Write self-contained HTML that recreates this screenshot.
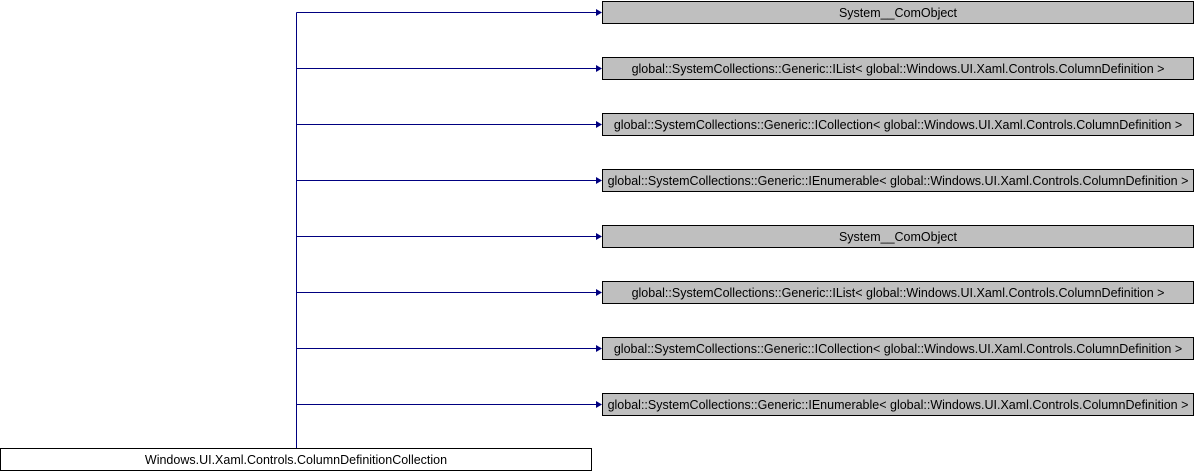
<!DOCTYPE html>
<html><head><meta charset="utf-8"><style>
html,body{margin:0;padding:0;background:#fff;width:1194px;height:472px;overflow:hidden}
svg{display:block}
text{font-family:"Liberation Sans",Arial,sans-serif;font-size:12.5px;fill:#000}
</style></head><body>
<svg width="1194" height="472" viewBox="0 0 1194 472" xmlns="http://www.w3.org/2000/svg">
<g stroke="#000080" stroke-width="1" fill="none">
<path d="M296.5 449V12.5"/>
<path d="M296.5 12.5H596"/><path d="M296.5 68.5H596"/><path d="M296.5 124.5H596"/><path d="M296.5 180.5H596"/>
<path d="M296.5 236.5H596"/><path d="M296.5 292.5H596"/><path d="M296.5 348.5H596"/><path d="M296.5 404.5H596"/>
</g>
<g fill="#000080">
<polygon points="596,9 602,12.5 596,16"/><polygon points="596,65 602,68.5 596,72"/>
<polygon points="596,121 602,124.5 596,128"/><polygon points="596,177 602,180.5 596,184"/>
<polygon points="596,233 602,236.5 596,240"/><polygon points="596,289 602,292.5 596,296"/>
<polygon points="596,345 602,348.5 596,352"/><polygon points="596,401 602,404.5 596,408"/>
</g>
<g fill="#bfbfbf" stroke="#000" stroke-width="1">
<rect x="602.5" y="1.5" width="591" height="22"/><rect x="602.5" y="57.5" width="591" height="22"/>
<rect x="602.5" y="113.5" width="591" height="22"/><rect x="602.5" y="169.5" width="591" height="22"/>
<rect x="602.5" y="225.5" width="591" height="22"/><rect x="602.5" y="281.5" width="591" height="22"/>
<rect x="602.5" y="337.5" width="591" height="22"/><rect x="602.5" y="393.5" width="591" height="22"/>
</g>
<rect x="0.5" y="448.5" width="591" height="22" fill="#fff" stroke="#000"/>
<g text-anchor="middle">
<text x="898" y="17">System__ComObject</text>
<text x="898" y="73">global::SystemCollections::Generic::IList&lt; global::Windows.UI.Xaml.Controls.ColumnDefinition &gt;</text>
<text x="898" y="129">global::SystemCollections::Generic::ICollection&lt; global::Windows.UI.Xaml.Controls.ColumnDefinition &gt;</text>
<text x="898" y="185">global::SystemCollections::Generic::IEnumerable&lt; global::Windows.UI.Xaml.Controls.ColumnDefinition &gt;</text>
<text x="898" y="241">System__ComObject</text>
<text x="898" y="297">global::SystemCollections::Generic::IList&lt; global::Windows.UI.Xaml.Controls.ColumnDefinition &gt;</text>
<text x="898" y="353">global::SystemCollections::Generic::ICollection&lt; global::Windows.UI.Xaml.Controls.ColumnDefinition &gt;</text>
<text x="898" y="409">global::SystemCollections::Generic::IEnumerable&lt; global::Windows.UI.Xaml.Controls.ColumnDefinition &gt;</text>
<text x="296" y="464">Windows.UI.Xaml.Controls.ColumnDefinitionCollection</text>
</g>
</svg>
</body></html>
